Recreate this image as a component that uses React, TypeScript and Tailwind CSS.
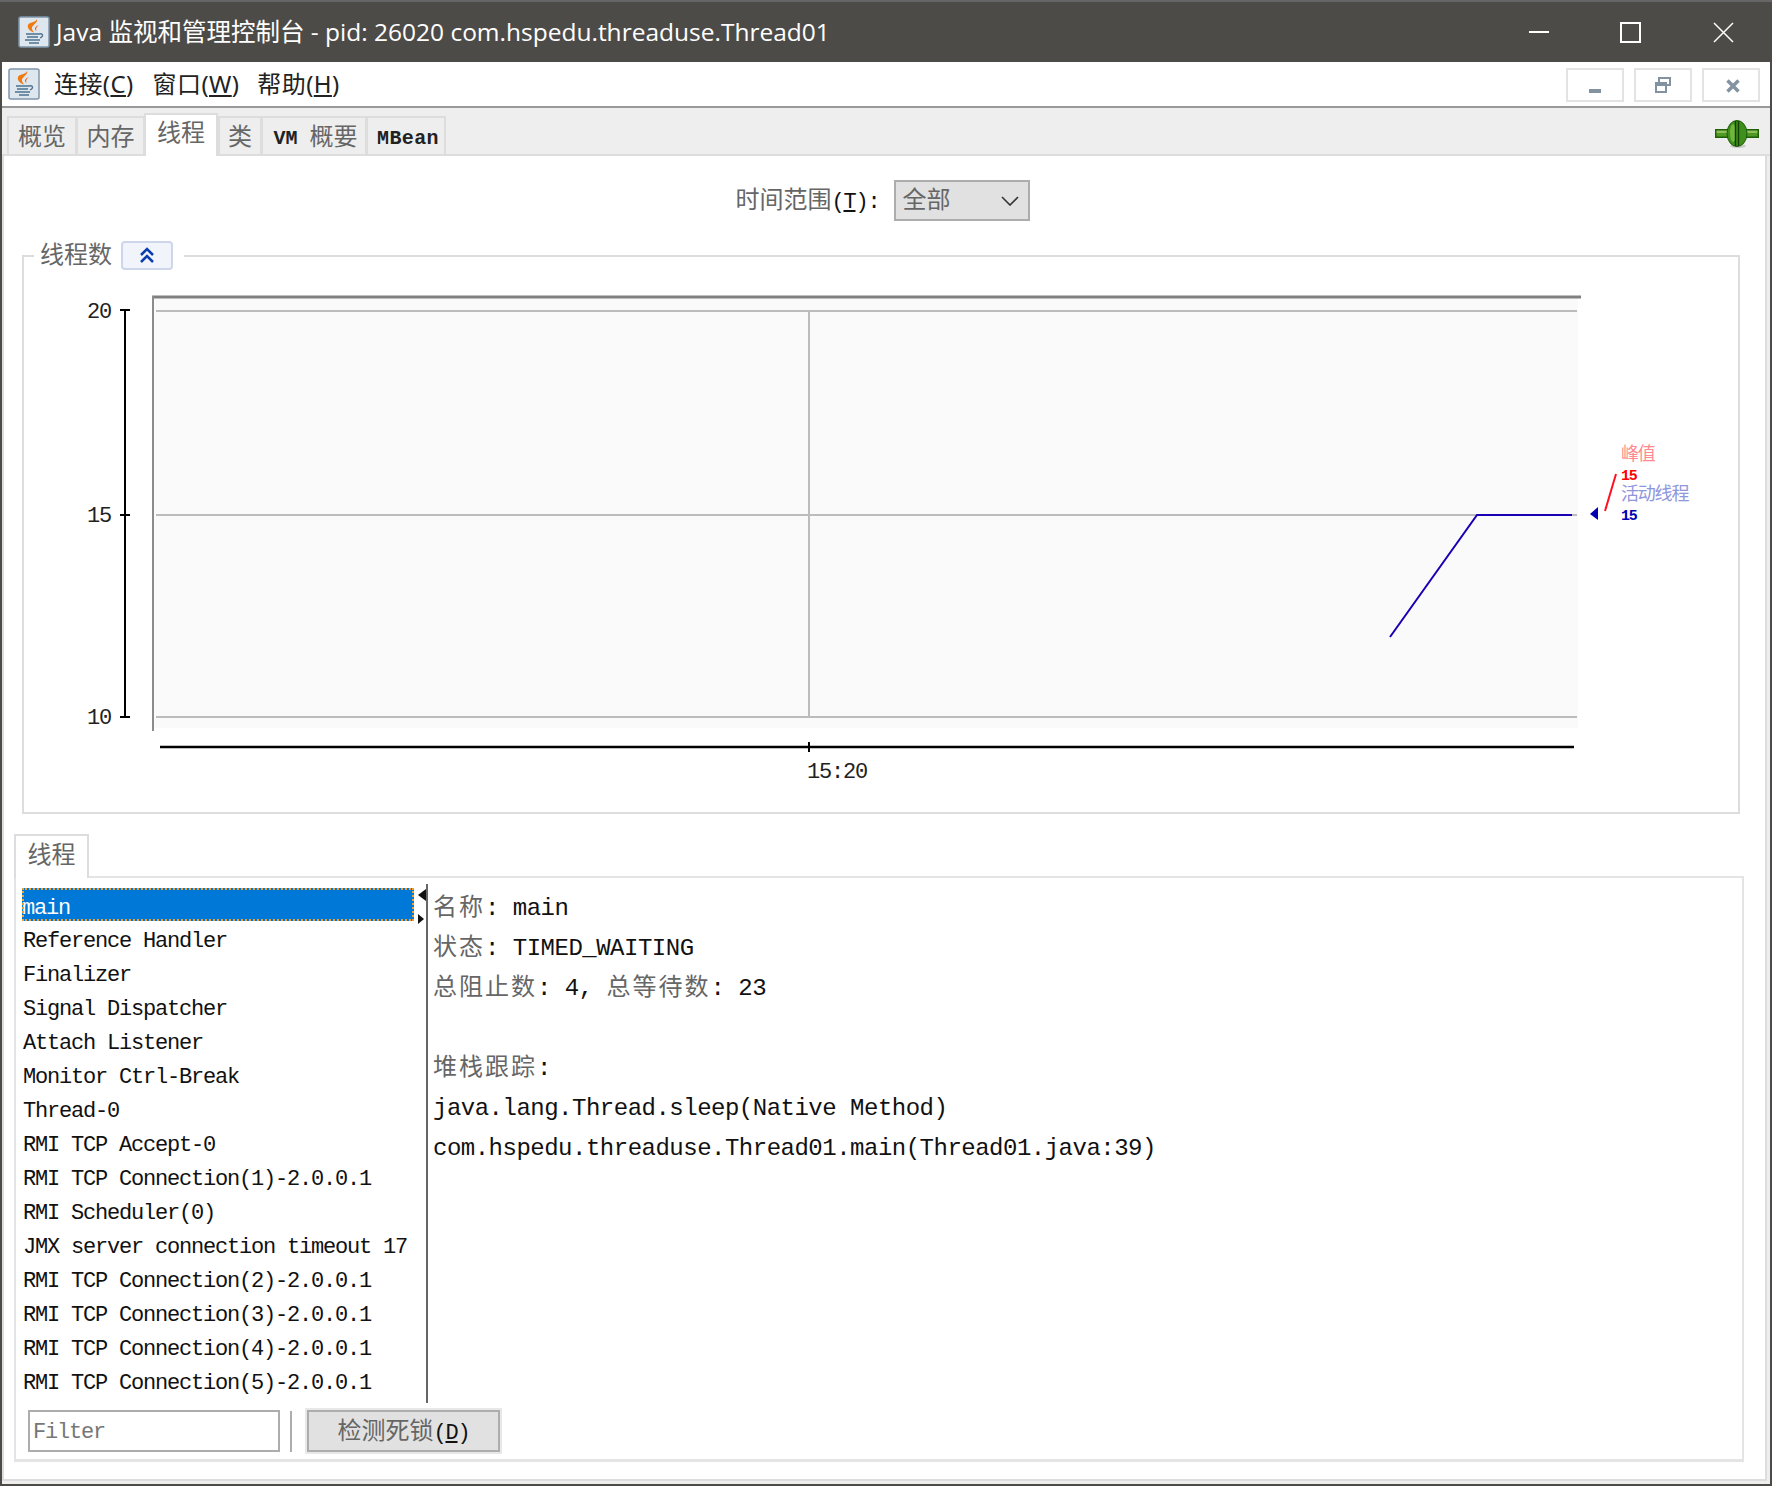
const threads = [
  "Reference Handler",
  "Finalizer",
  "Signal Dispatcher",
  "Attach Listener",
  "Monitor Ctrl-Break",
  "Thread-0",
  "RMI TCP Accept-0",
  "RMI TCP Connection(1)-2.0.0.1",
  "RMI Scheduler(0)",
  "JMX server connection timeout 17",
  "RMI TCP Connection(2)-2.0.0.1",
  "RMI TCP Connection(3)-2.0.0.1",
  "RMI TCP Connection(4)-2.0.0.1",
  "RMI TCP Connection(5)-2.0.0.1",
];

const mono = "font-['Liberation_Mono','Noto_Sans_CJK_SC',monospace]";

// CJK glyphs run wider than the latin mono in the reference bitmap font
const Zh = ({ children }: { children: React.ReactNode }) => (
  <span className="text-[24px] tracking-normal text-[#666]">{children}</span>
);

const ZhBig = ({ children }: { children: React.ReactNode }) => (
  <span className="text-[24px] tracking-[2px] text-[#666]">{children}</span>
);

const JavaIcon = ({ size }: { size: number }) => (
  <svg width={size} height={size} viewBox="0 0 32 32">
    <rect x="1" y="1" width="30" height="30" rx="2" fill="#dfe7ee" stroke="#7f97ab" strokeWidth="1.5" />
    <path d="M19 3c1.500 4-6 6-5 10 .4 1.500 1.500 2.500 2 3.500-4-1.500-7-4-6-7.500 1-3 8-2.500 9-6z" fill="#f07a10" />
    <path d="M21 9c-2.500 1.500-3.500 3.500-2.500 6-2-1.500-2.500-4 2.500-6z" fill="#e8540e" />
    <path d="M8 18h13M9 21h11M7 24h15M11 27h10" stroke="#4d7190" strokeWidth="1.600" fill="none" />
    <path d="M21 18c4-1 5 2 1 4" stroke="#4d7190" strokeWidth="1.300" fill="none" />
  </svg>
);

const ConnectedIcon = () => (
  <svg width="46" height="28" viewBox="0 0 46 28">
    <ellipse cx="24" cy="26" rx="8" ry="2" fill="#ccc" />
    <rect x="1" y="9" width="44" height="9" fill="#1f5f06" />
    <rect x="2.500" y="10.500" width="41" height="3" fill="#8cc15a" />
    <rect x="2.500" y="13.500" width="41" height="3" fill="#4f9a22" />
    <ellipse cx="23" cy="13.500" rx="10" ry="13" fill="#3f8f1c" stroke="#1c5a06" strokeWidth="1" />
    <ellipse cx="19" cy="13" rx="3" ry="9" fill="#71b53f" />
    <path d="M21.500 1v25M24.500 1v25" stroke="#123f03" strokeWidth="1.400" />
  </svg>
);

const Tab = ({ children, active, className }: { children: React.ReactNode; active?: boolean; className: string }) => (
  <div
    className={
      active
        ? `h-[43px] -mb-[2px] pb-[2px] flex items-center justify-center bg-white border-t-2 border-x-2 border-[#ddd] border-b-0 ${className}`
        : `h-[38px] pt-[5px] flex items-center justify-center bg-[#eeeeee] border-2 border-[#ddd] border-b-0 -mr-[1px] ${className}`
    }
  >
    {children}
  </div>
);

const MdiButton = ({ children }: { children: React.ReactNode }) => (
  <div className="w-[58px] h-[34px] border-2 border-[#e3e3e3] flex items-center justify-center">{children}</div>
);

const ThreadChart = () => (
  <svg className="block" width="1714" height="500" viewBox="24 285 1714 500">
    <rect x="152" y="296" width="1426" height="432" fill="#fafafa" />
    <path d="M152 297H1581" stroke="#808080" strokeWidth="3" />
    <path d="M153 296V731" stroke="#8c8c8c" strokeWidth="2" />
    <path d="M156 311H1577M156 515H1577M156 717H1577M809 311V717" stroke="#bcbcbc" strokeWidth="2" fill="none" />
    <path d="M125 310V717M120 310H130M120 515H130M120 717H130" stroke="#000" strokeWidth="2" fill="none" />
    <path d="M160 747H1574" stroke="#000" strokeWidth="2.500" />
    <path d="M809 742V752" stroke="#000" strokeWidth="2" />
    <g fontFamily="'Liberation Mono', monospace" fontSize="22" letterSpacing="-1.2" fill="#222">
      <text x="87" y="318">20</text>
      <text x="87" y="522">15</text>
      <text x="87" y="724">10</text>
      <text x="807" y="778">15:20</text>
    </g>
    <path d="M1390 637L1477 515H1572" stroke="#1a00b4" strokeWidth="2" fill="none" />
    <path d="M1590 514L1598 507V520Z" fill="#0000b0" />
    <path d="M1605 511L1616 474" stroke="#ff1020" strokeWidth="2" />
    <g fontFamily="'Liberation Mono', 'Noto Sans CJK SC', monospace" fontSize="15" fontWeight="700">
      <text x="1621" y="460" fill="#ff8a90" fontSize="18" fontWeight="400">峰值</text>
      <text x="1621" y="480" fill="#ff0000">15</text>
      <text x="1621" y="500" fill="#8f96dc" fontSize="18" fontWeight="400">活动线程</text>
      <text x="1621" y="520" fill="#0000b0">15</text>
    </g>
  </svg>
);

export default function App() {
  return (
    <div className={`w-[1772px] h-[1486px] bg-[#4d4b48] px-[2px] pb-[2px] flex flex-col overflow-hidden ${mono}`}>
      {/* title bar */}
      <div className="h-[62px] shrink-0 -mx-[2px] border-t-2 border-[#666] flex items-center pl-[18px] text-white">
        <JavaIcon size={32} />
        <span className="ml-[6px] text-[24.5px] font-['Open_Sans','Noto_Sans_CJK_SC',sans-serif] whitespace-nowrap">
          Java 监视和管理控制台 - pid: 26020 com.hspedu.threaduse.Thread01
        </span>
        <div className="ml-auto flex items-center">
          <svg width="20" height="2" className="mr-[71px]"><rect width="20" height="2" fill="#fff" /></svg>
          <svg width="21" height="21" className="mr-[72px]"><rect x="1" y="1" width="19" height="19" fill="none" stroke="#fff" strokeWidth="2" /></svg>
          <svg width="21" height="21" className="mr-[38px]"><path d="M1 1L20 20M20 1L1 20" stroke="#fff" strokeWidth="1.500" /></svg>
        </div>
      </div>

      {/* menu bar */}
      <div className="h-[46px] shrink-0 bg-white border-b-2 border-[#999] flex items-center pl-[6px] pr-[10px] font-['Noto_Sans','Noto_Sans_CJK_SC',sans-serif] text-[24px] text-[#222]">
        <JavaIcon size={32} />
        <span className="ml-[14px] tracking-[0.4px]">连接(<u>C</u>)</span>
        <span className="ml-[19px] tracking-[0.4px]">窗口(<u>W</u>)</span>
        <span className="ml-[18px] tracking-[0.4px]">帮助(<u>H</u>)</span>
        <div className="ml-auto mt-[2px] flex gap-[10px]">
          <MdiButton>
            <svg width="12" height="18"><rect y="13" width="12" height="4" fill="#8392a1" /></svg>
          </MdiButton>
          <MdiButton>
            <svg width="16" height="16"><path d="M4 5V1H15V8H12M1 6H11V15H1ZM1 8H11" fill="none" stroke="#8392a1" strokeWidth="2" /></svg>
          </MdiButton>
          <MdiButton>
            <svg width="14" height="14" className="ml-[3px] mt-[2px]"><path d="M1.500 1.500L12.500 12.500M12.500 1.500L1.500 12.500" stroke="#8392a1" strokeWidth="3.500" /></svg>
          </MdiButton>
        </div>
      </div>

      {/* main tabs */}
      <div className="h-[48px] shrink-0 bg-[#eeeeee] border-b-2 border-[#ddd] flex items-end pl-[5px] pr-[10px] text-[20px] text-[#222]">
        <Tab className="w-[70px]"><Zh>概览</Zh></Tab>
        <Tab className="w-[69px]"><Zh>内存</Zh></Tab>
        <Tab active className="w-[74px]"><Zh>线程</Zh></Tab>
        <Tab className="w-[44px]"><Zh>类</Zh></Tab>
        <Tab className="w-[106px] pl-[3px]"><span className="font-bold whitespace-pre">VM </span><Zh>概要</Zh></Tab>
        <Tab className="w-[80px] pl-[4px]"><span className="font-bold tracking-[0.4px]">MBean</span></Tab>
        <div className="ml-auto self-center mt-[6px]"><ConnectedIcon /></div>
      </div>

      {/* tab content */}
      <div className="flex-1 min-h-0 bg-[#eeeeee] pr-[3px] pb-[3px]">
        <div className="h-full bg-white border-x-2 border-b-2 border-[#ddd] flex flex-col text-[22px] tracking-[-1.2px] text-[#111]">
          <div className="mt-[24px] h-[41px] flex items-center justify-center pr-[4px]">
            <span className="mr-[14px] pt-[3px] whitespace-nowrap"><Zh>时间范围</Zh>(<u>T</u>):</span>
            <div className="w-[136px] h-[41px] bg-[#e1e1e1] border-2 border-[#adadad] flex items-center pl-[7px] pr-[9px]">
              <span className="pt-[3px]"><Zh>全部</Zh></span>
              <svg width="18" height="10" className="ml-auto" viewBox="0 0 18 10"><path d="M1 1L9 9L17 1" fill="none" stroke="#333" strokeWidth="1.600" /></svg>
            </div>
          </div>

          {/* thread count group */}
          <div className="relative mt-[34px] ml-[18px] w-[1718px] h-[559px] border-2 border-[#ddd] pt-[28px]">
            <div className="absolute left-[10px] -top-[16px] h-[31px] w-[150px] bg-white flex items-center pl-[6px]">
              <Zh>线程数</Zh>
              <div className="ml-[9px] -mt-[3px] w-[52px] h-[29px] bg-[#f1f4fb] border-2 border-[#cdd6ea] rounded-[4px] flex items-center justify-center">
                <svg width="16" height="16" viewBox="0 0 16 16"><path d="M2 8L8 2L14 8M2 15L8 9L14 15" fill="none" stroke="#0b3fb0" strokeWidth="2.500" /></svg>
              </div>
            </div>
            <ThreadChart />
          </div>

          {/* thread list tab */}
          <div className="mt-[20px] ml-[10px] w-[75px] h-[44px] -mb-[2px] relative bg-white border-2 border-b-0 border-[#ddd] flex items-center justify-center">
            <Zh>线程</Zh>
          </div>
          <div className="ml-[10px] w-[1730px] h-[586px] border-t-2 border-x-2 border-b-[3px] border-[#e4e4e4] flex flex-col">
            <div className="flex-1 min-h-0 flex">
              <div className="w-[410px] pt-[10px] pl-[6px] pr-[12px] relative">
                <div className="h-[33px] mb-[1px] pt-[8px] bg-[#0078d7] outline-2 -outline-offset-2 outline-dotted outline-[#f0a030] text-white flex items-center leading-none">main</div>
                {threads.map((t) => (
                  <div key={t} className="h-[34px] pt-[5px] pl-[1px] flex items-center whitespace-nowrap">{t}</div>
                ))}
                <svg width="8" height="12" className="absolute right-0 top-[11px]"><path d="M0 6L8 0V12Z" fill="#111" /></svg>
                <svg width="6" height="10" className="absolute right-[2px] top-[36px]"><path d="M6 5L0 0V10Z" fill="#111" /></svg>
              </div>
              <div className="w-[2px] mt-[6px] bg-[#666]" />
              <div className="pl-[5px] pt-[9px] text-[24px] tracking-[-0.5px]">
                <div className="h-[40px] pt-[4px] flex items-center whitespace-pre"><ZhBig>名称</ZhBig>: main</div>
                <div className="h-[40px] pt-[4px] flex items-center whitespace-pre"><ZhBig>状态</ZhBig>: TIMED_WAITING</div>
                <div className="h-[40px] pt-[4px] flex items-center whitespace-pre"><ZhBig>总阻止数</ZhBig>: 4, <ZhBig>总等待数</ZhBig>: 23</div>
                <div className="h-[40px]" />
                <div className="h-[40px] pt-[4px] flex items-center whitespace-pre"><ZhBig>堆栈跟踪</ZhBig>:</div>
                <div className="h-[40px] pt-[4px] flex items-center whitespace-pre">java.lang.Thread.sleep(Native Method)</div>
                <div className="h-[40px] pt-[4px] flex items-center whitespace-pre">com.hspedu.threaduse.Thread01.main(Thread01.java:39)</div>
              </div>
            </div>
            <div className="h-[46px] mt-[5px] mb-[5px] shrink-0 flex items-center pl-[12px]">
              <div className="w-[252px] h-[42px] border-2 border-[#adadad] flex items-center pl-[3px] pt-[3px] text-[#777]">Filter</div>
              <div className="w-[2px] h-[41px] ml-[10px] bg-[#adadad]" />
              <div className="ml-[13px] w-[197px] h-[46px] border-2 border-[#e8e8e8]">
                <div className="h-full bg-[#e1e1e1] border-2 border-[#adadad] flex items-center justify-center pt-[3px]">
                  <span><Zh>检测死锁</Zh>(<u>D</u>)</span>
                </div>
              </div>
            </div>
          </div>
        </div>
      </div>
    </div>
  );
}
